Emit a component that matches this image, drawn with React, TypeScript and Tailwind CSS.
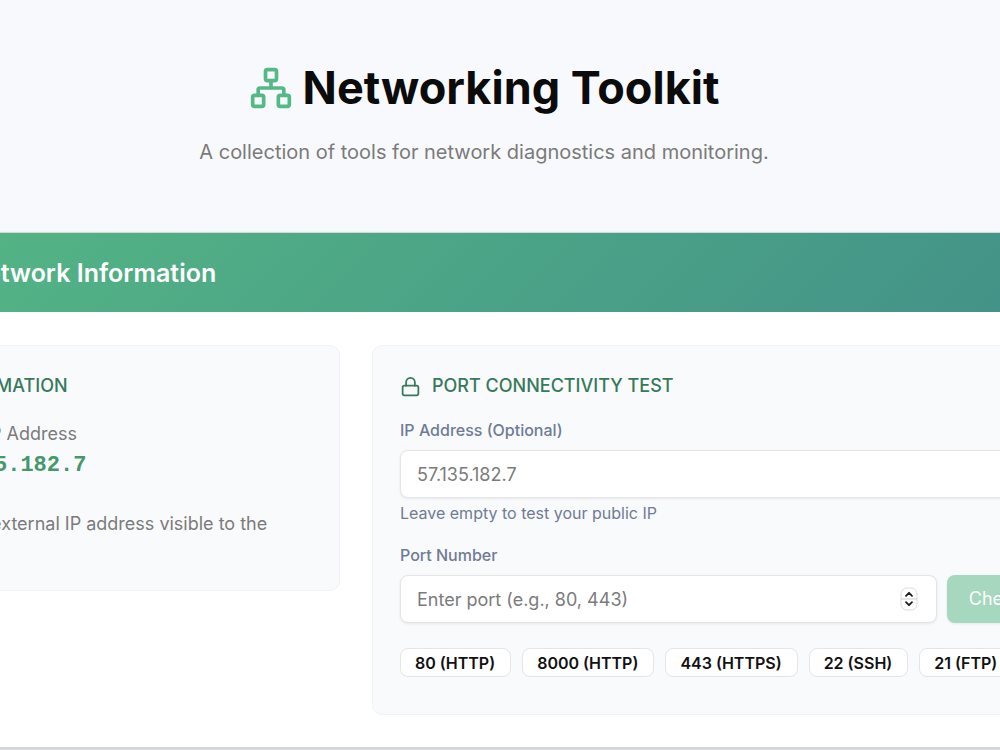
import React, { useState } from 'react';
import { Info, Lock, Network } from 'lucide-react';

const COMMON_PORTS = [
  { port: '80', name: 'HTTP' },
  { port: '8000', name: 'HTTP' },
  { port: '443', name: 'HTTPS' },
  { port: '22', name: 'SSH' },
  { port: '21', name: 'FTP' },
];

const Stepper = () => (
  <svg
    className="absolute right-[19px] top-1/2 -translate-y-1/2 pointer-events-none"
    width="18"
    height="24"
    viewBox="0 0 18 24"
    fill="none"
  >
    <rect x="1" y="1" width="16" height="22" rx="6" fill="#fff" stroke="#dcdcdc" />
    <path d="M1 12h16" stroke="#cfcfcf" />
    <path d="M6 8.8l3-3 3 3M6 15.2l3 3 3-3" stroke="#1c1c1c" strokeWidth="1.8" strokeLinecap="round" strokeLinejoin="round" />
  </svg>
);

const IpInformation = () => (
  <div className="w-[441px] shrink-0 rounded-[10px] border border-[#f0f3f8] bg-[#f9fafc] pr-[27px] pl-[28px] pt-[26px] pb-[24px]">
    <h3 className="-ml-2 text-lg leading-7 font-medium text-[#37795a]">IP INFORMATION</h3>
    <p className="mt-[22px] text-lg leading-6 text-[#7b7b7b]">Public IP Address</p>
    <p className="mt-1 font-['Liberation_Mono',monospace] text-[22px] leading-8 font-bold text-[#46976c]">57.135.182.7</p>
    <p className="mt-7 text-lg leading-7 text-[#7b7b7b]">
      <Info className="mr-px inline h-[18px] w-[18px] align-[-3px]" />
      Your external IP address visible to the internet.
    </p>
  </div>
);

const PortTest = () => {
  const [ip, setIp] = useState('');
  const [port, setPort] = useState('');

  const inputClass =
    'block h-12 w-full rounded-lg border border-[#e4e5e7] bg-white px-4 text-lg text-[#0f0f0f] placeholder-[#7b7b7b] shadow-[0_1px_3px_rgba(0,0,0,0.08)] outline-none';

  return (
    <div className="min-w-0 flex-1 rounded-[10px] border border-[#f0f3f8] bg-[#f9fafc] px-[27px] pt-[26px] pb-[37px]">
      <h3 className="flex items-center gap-[11px] text-lg leading-7 font-medium text-[#37795a]">
        <Lock className="h-[21px] w-[21px]" strokeWidth={2} />
        PORT CONNECTIVITY TEST
      </h3>

      <label htmlFor="ip" className="mt-[18px] block text-base leading-6 font-medium text-[#6f7c96]">
        IP Address (Optional)
      </label>
      <input
        id="ip"
        type="text"
        placeholder="57.135.182.7"
        value={ip}
        onChange={(e) => setIp(e.target.value)}
        className={`mt-2 ${inputClass}`}
      />
      <p className="mt-[3px] text-base leading-6 text-[#6f7c96]">Leave empty to test your public IP</p>

      <label htmlFor="port" className="mt-[18px] block text-base leading-6 font-medium text-[#6f7c96]">
        Port Number
      </label>
      <div className="mt-2 flex gap-[10px]">
        <div className="relative flex-1">
          <input
            id="port"
            type="number"
            placeholder="Enter port (e.g., 80, 443)"
            value={port}
            onChange={(e) => setPort(e.target.value)}
            className={`[appearance:textfield] ${inputClass}`}
          />
          <Stepper />
        </div>
        <button
          disabled={!port}
          className="h-12 w-[94px] rounded-lg bg-[#48bb78] pl-1 text-lg text-white shadow-[0_1px_3px_rgba(0,0,0,0.08)] disabled:bg-[#a5d8be]"
        >
          Check
        </button>
      </div>

      <div className="mt-[25px] flex gap-[11px]">
        {COMMON_PORTS.map((p) => (
          <button
            key={p.port}
            onClick={() => setPort(p.port)}
            className="flex h-[29px] shrink-0 items-center rounded-lg border border-[#e4e5e7] bg-white px-[14px] text-base leading-6 font-semibold text-[#111111]"
          >
            <span className="pr-px">{p.port} ({p.name})</span>
          </button>
        ))}
      </div>
    </div>
  );
};

export default function App() {
  return (
    <div className="min-h-screen overflow-hidden bg-[#f8f9fc] font-[Inter,sans-serif]">
      <header className="flex flex-col items-center pt-[60px] pr-8 pb-16">
        <h1 className="flex items-center gap-[10px] text-[45px] leading-[56px] font-bold text-[#0b0b0b]">
          <Network className="h-11 w-11 text-[#55b887]" strokeWidth={2} />
          Networking Toolkit
        </h1>
        <p className="mt-5 text-xl leading-8 text-[#7b7b7b]">
          A collection of tools for network diagnostics and monitoring.
        </p>
      </header>

      <section className="-mr-[101px] -ml-[133px] border-y border-[#d4d8d7] bg-white shadow-[0_2px_4px_rgba(0,0,0,0.2)]">
        <div className="bg-linear-135 from-[#55b784] to-[#429088] px-8 pt-6 pb-[23px]">
          <h2 className="pl-[68px] text-[25px] leading-8 font-semibold text-white">Network Information</h2>
        </div>
        <div className="flex items-start gap-8 px-8 pt-[33px] pb-8">
          <IpInformation />
          <PortTest />
        </div>
      </section>
    </div>
  );
}
